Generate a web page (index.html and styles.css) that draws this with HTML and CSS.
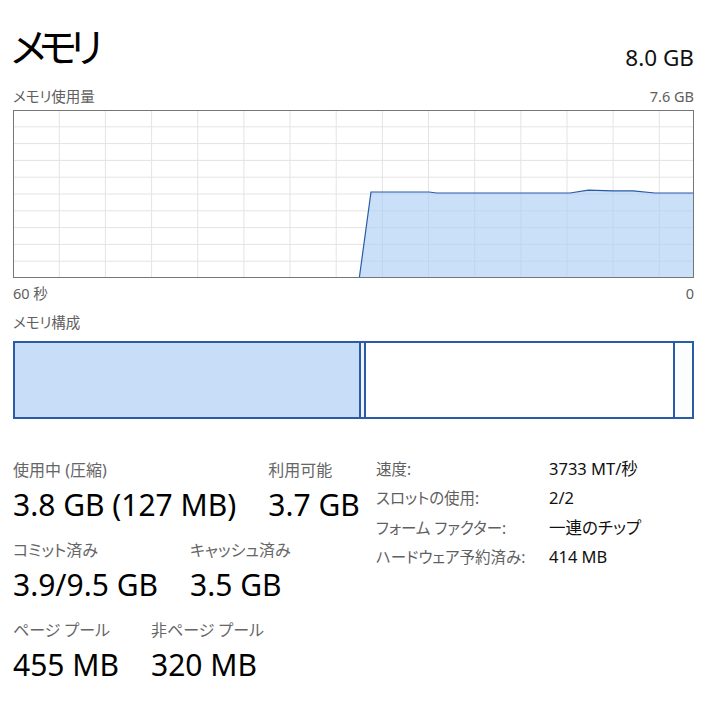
FILE: index.html
```html
<!DOCTYPE html>
<html lang="ja">
<head>
<meta charset="utf-8">
<link rel="stylesheet" href="styles.css">
</head>
<body>
<div class="page">
  <div class="head">
    <div class="title">メモリ</div>
    <div class="total">8.0 GB</div>
  </div>
  <div class="caprow">
    <span>メモリ使用量</span>
    <span>7.6 GB</span>
  </div>
  <svg class="chart" width="681" height="168" viewBox="0 0 681 168">
    <g class="grid">
      <path d="M0 16.8H681M0 33.6H681M0 50.4H681M0 67.2H681M0 84H681M0 100.8H681M0 117.6H681M0 134.4H681M0 151.2H681"/>
      <path d="M46.3 0V168M92.4 0V168M138.6 0V168M184.7 0V168M230.9 0V168M277 0V168M323.2 0V168M369.4 0V168M415.5 0V168M461.7 0V168M507.8 0V168M554 0V168M600.1 0V168M646.3 0V168"/>
    </g>
    <path class="area" d="M346.3 168L358 82L416 82L423.7 83L557 83L575.3 80.2L600 80.8L620 80.8L642 83L681 83L681 168Z"/>
    <path class="line" d="M346.3 168L358 82L416 82L423.7 83L557 83L575.3 80.2L600 80.8L620 80.8L642 83L681 83"/>
    <rect class="frame" x="0.5" y="0.5" width="680" height="167"/>
  </svg>
  <div class="caprow axis">
    <span>60 秒</span>
    <span>0</span>
  </div>
  <div class="caprow comp-cap">
    <span>メモリ構成</span>
  </div>
  <div class="comp">
    <div class="seg inuse"></div>
    <div class="seg modified"></div>
    <div class="seg standby"></div>
    <div class="seg free"></div>
  </div>
  <div class="stats">
    <div class="left">
      <div class="srow">
        <div class="stat"><div class="lbl">使用中 (圧縮)</div><div class="val">3.8 GB (127 MB)</div></div>
        <div class="stat"><div class="lbl">利用可能</div><div class="val">3.7 GB</div></div>
      </div>
      <div class="srow">
        <div class="stat"><div class="lbl">コミット済み</div><div class="val">3.9/9.5 GB</div></div>
        <div class="stat"><div class="lbl">キャッシュ済み</div><div class="val">3.5 GB</div></div>
      </div>
      <div class="srow">
        <div class="stat"><div class="lbl">ページ プール</div><div class="val">455 MB</div></div>
        <div class="stat"><div class="lbl">非ページ プール</div><div class="val">320 MB</div></div>
      </div>
    </div>
    <div class="right">
      <div class="k">速度:</div><div class="v">3733 MT/秒</div>
      <div class="k">スロットの使用:</div><div class="v">2/2</div>
      <div class="k">フォーム ファクター:</div><div class="v">一連のチップ</div>
      <div class="k">ハードウェア予約済み:</div><div class="v">414 MB</div>
    </div>
  </div>
</div>
</body>
</html>
```

FILE: styles.css
```css
html, body {
  margin: 0;
  padding: 0;
  background: #ffffff;
}
body {
  font-family: "Noto Sans", "Noto Sans CJK JP", sans-serif;
  font-feature-settings: "palt";
  color: #000;
}
.page {
  width: 681px;
  padding: 0 23px 0 13px;
}
.head {
  display: flex;
  justify-content: space-between;
  align-items: flex-start;
  height: 80px;
}
.title {
  font-size: 40px;
  line-height: 48px;
  letter-spacing: -7px;
  margin-top: 23px;
  margin-left: -2px;
}
.total {
  font-size: 22.5px;
  line-height: 30px;
  margin-top: 43px;
  color: #111;
}
.caprow {
  display: flex;
  justify-content: space-between;
  font-size: 14.5px;
  line-height: 20px;
  color: #606060;
  height: 30px;
  align-items: flex-start;
  padding-top: 6px;
  box-sizing: border-box;
}
.chart {
  display: block;
}
.grid path {
  stroke: #e4e4e4;
  stroke-width: 1;
  fill: none;
}
.area {
  fill: #a9cdf5;
  fill-opacity: 0.62;
}
.line {
  fill: none;
  stroke: #2a5ba7;
  stroke-width: 1.2;
}
.frame {
  fill: none;
  stroke: #767676;
  stroke-width: 1;
}
.axis {
  padding-top: 5px;
  height: 28px;
}
.comp-cap {
  height: 35px;
  padding-top: 6px;
}
.comp {
  display: flex;
  height: 78px;
}
.seg {
  box-sizing: border-box;
  border: 2px solid #2a5ba7;
  height: 100%;
}
.inuse {
  width: 348px;
  background: #c8ddf8;
}
.modified {
  width: 5px;
  border-left: none;
  background: #eef4fc;
}
.standby {
  width: 309px;
  border-left: none;
  background: #ffffff;
}
.free {
  width: 19px;
  border-left: none;
  background: #fbfdff;
}
.stats {
  display: flex;
  padding-top: 40px;
}
.left {
  width: 363px;
  display: flex;
  flex-direction: column;
  gap: 14px;
}
.srow {
  display: flex;
  gap: 32px;
}
.lbl {
  font-size: 16px;
  line-height: 22px;
  color: #666666;
}
.val {
  font-size: 30px;
  line-height: 40px;
  color: #000;
  margin-top: 4px;
}
.right {
  display: grid;
  grid-template-columns: 173px auto;
  grid-auto-rows: 29.4px;
  align-content: start;
  font-size: 15.5px;
  line-height: 20px;
  padding-top: 0;
}
.k {
  color: #5f5f5f;
}
.v {
  color: #111;
  font-size: 16.5px;
}
```
